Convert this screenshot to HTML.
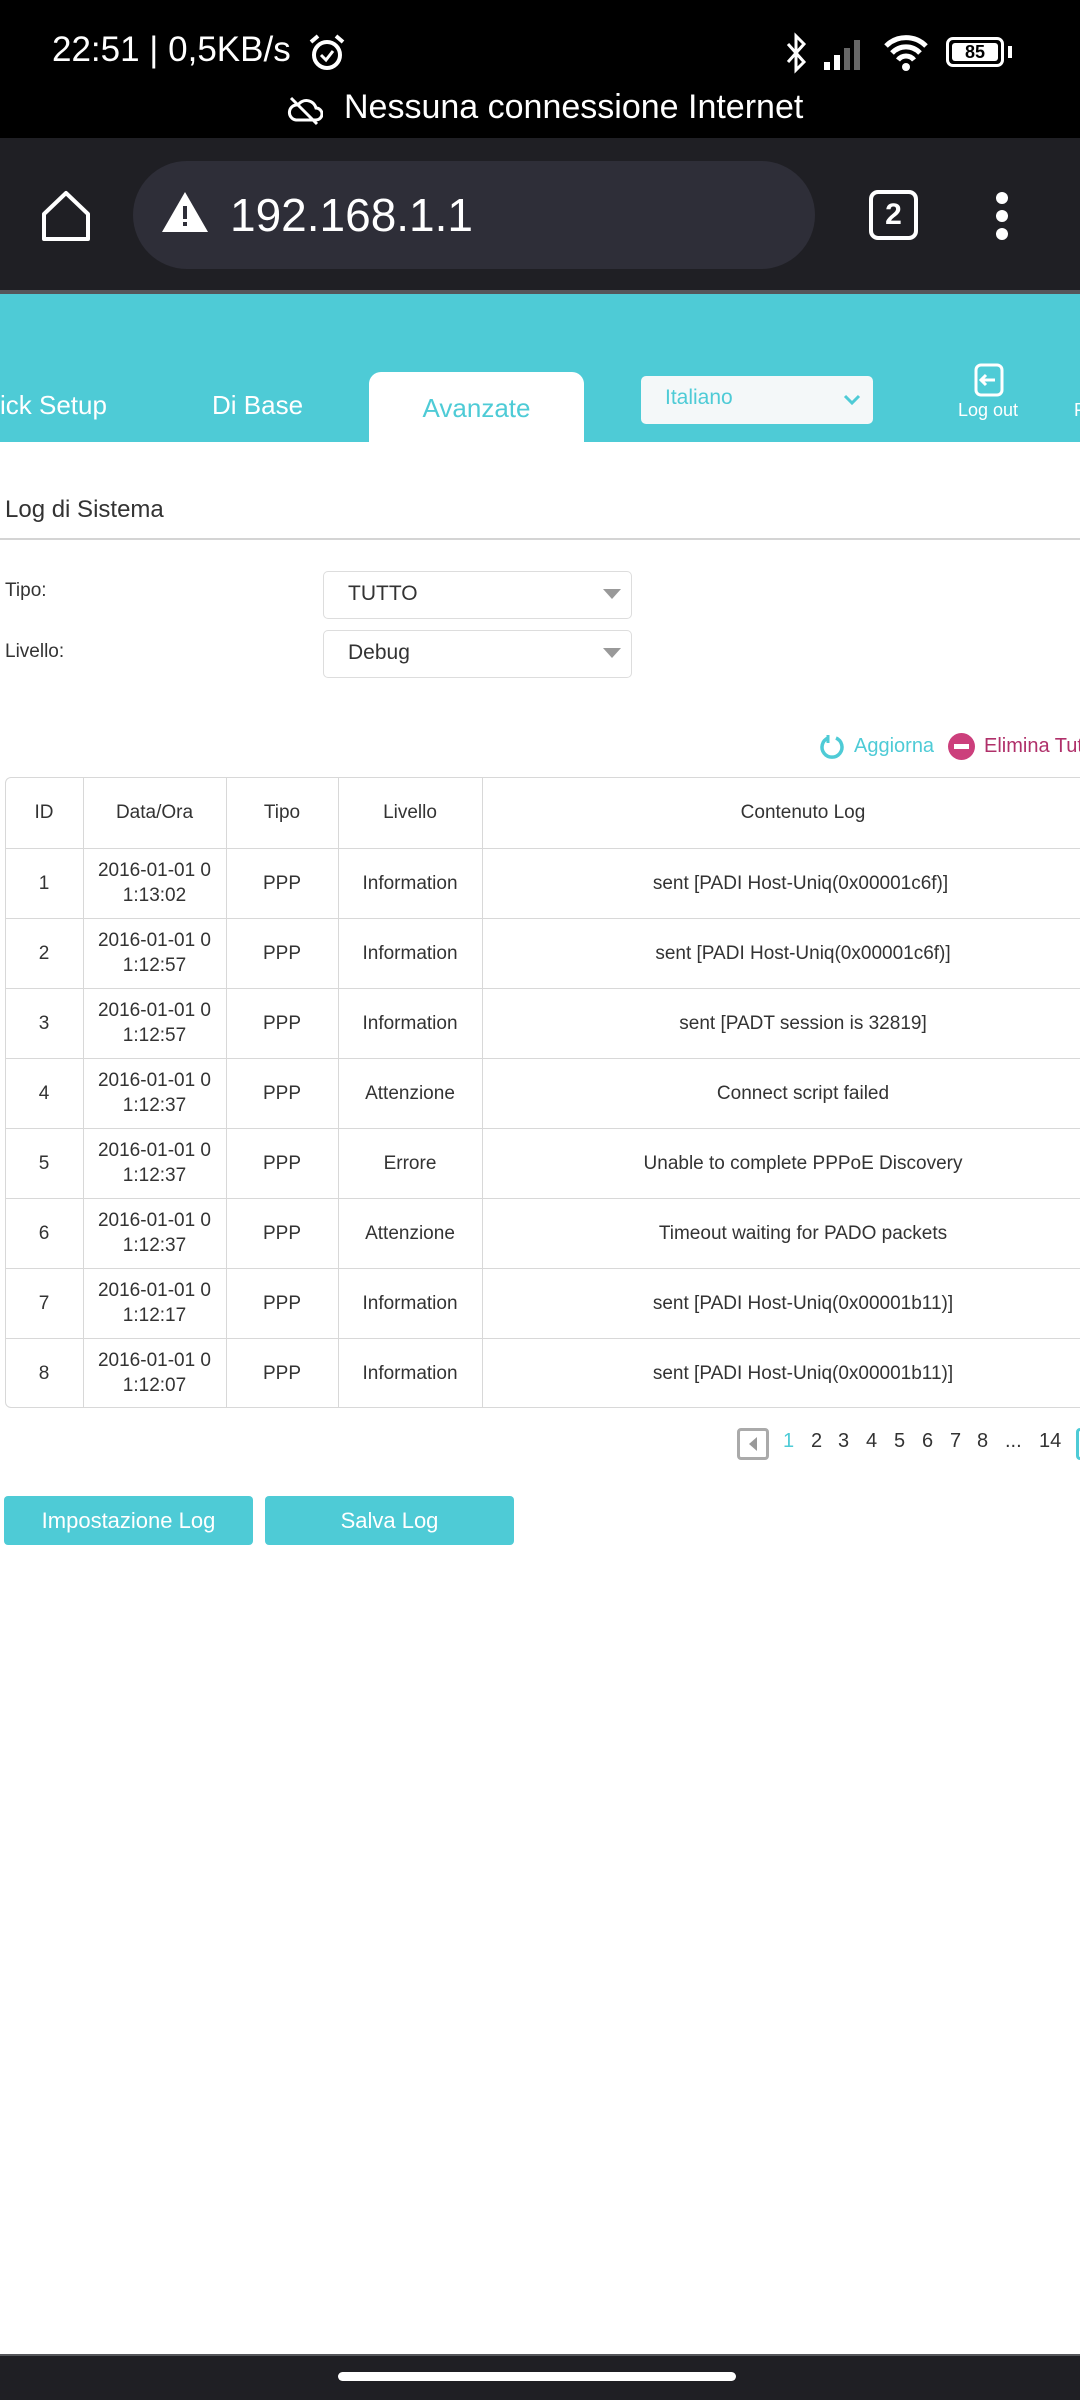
<!DOCTYPE html>
<html><head><meta charset="utf-8"><style>
*{margin:0;padding:0;box-sizing:border-box}
body{width:1080px;height:2400px;background:#fff;font-family:"Liberation Sans",sans-serif;position:relative;overflow:hidden;color:#333}
.a{position:absolute}
.st{background:#000;left:0;top:0;width:1080px;height:138px;color:#fff}
.tb{background:#1f1f24;left:0;top:138px;width:1080px;height:154px}
.teal{background:#4ecbd6;left:0;top:294px;width:1080px;height:148px}
table{border-collapse:collapse;font-size:19px;color:#333}
td{border:1.5px solid #d8d8d8;text-align:center;height:70px;line-height:25px}
.sel{border:1.5px solid #ddd;border-radius:5px;background:#fff;font-size:21px;color:#333;padding-left:24px;line-height:44px}
.tri{position:absolute;right:10px;top:17px;width:0;height:0;border-left:9px solid transparent;border-right:9px solid transparent;border-top:10px solid #999}
.btn{background:#4ecbd6;color:#fff;font-size:22px;text-align:center;line-height:49px;border-radius:4px;top:1496px;height:49px;width:249px}
.pg{top:1430px;font-size:20px;color:#333}
</style></head><body>
<div class="a st">
 <div class="a" style="left:52px;top:30px;font-size:35px;">22:51 | 0,5KB/s</div>
 <svg class="a" style="left:306px;top:32px" width="42" height="42" viewBox="0 0 42 42"><circle cx="21" cy="23" r="13" stroke="#fff" stroke-width="4" fill="none"/><path d="M15 23l5 5 7-9" stroke="#fff" stroke-width="3" fill="none"/><path d="M5 10l7-6M37 10l-7-6" stroke="#fff" stroke-width="4"/></svg>
 <svg class="a" style="left:782px;top:32px" width="30" height="42" viewBox="0 0 30 42"><path d="M6 12l16 18-8 8V4l8 8L6 30" stroke="#fff" stroke-width="3" fill="none"/></svg>
 <svg class="a" style="left:824px;top:36px" width="50" height="34"><rect x="0" y="26" width="6" height="8" fill="#fff"/><rect x="10" y="19" width="6" height="15" fill="#fff"/><rect x="20" y="12" width="6" height="22" fill="#666"/><rect x="30" y="4" width="6" height="30" fill="#666"/></svg>
 <svg class="a" style="left:882px;top:34px" width="48" height="38" viewBox="0 0 48 38"><path d="M4 12a28 28 0 0 1 40 0M10 19a19 19 0 0 1 28 0M16 26a10 10 0 0 1 16 0" stroke="#fff" stroke-width="5" fill="none"/><circle cx="24" cy="33" r="4" fill="#fff"/></svg>
 <div class="a" style="left:946px;top:37px;width:58px;height:30px;border:3px solid #fff;border-radius:7px"><div style="margin:3px;height:18px;background:#fff;border-radius:3px;color:#000;font-size:18px;font-weight:bold;text-align:center;line-height:18px">85</div></div>
 <div class="a" style="left:1008px;top:46px;width:4px;height:12px;background:#fff"></div>
 <svg class="a" style="left:287px;top:94px" width="36" height="32" viewBox="0 0 36 32"><path d="M9 26h20a6 6 0 0 0 0-12 10 10 0 0 0-18-3 7 7 0 0 0-2 15z" stroke="#fff" stroke-width="3" fill="none"/><path d="M4 4l26 26" stroke="#fff" stroke-width="3"/></svg>
 <div class="a" style="left:344px;top:88px;font-size:34px">Nessuna connessione Internet</div>
</div>
<div class="a tb">
 <svg class="a" style="left:40px;top:52px" width="52" height="52" viewBox="0 0 52 52"><path d="M4 24L26 3l22 21v25H4z" stroke="#fff" stroke-width="4" fill="none" stroke-linejoin="round"/></svg>
 <div class="a" style="left:133px;top:23px;width:682px;height:108px;background:#2e2e38;border-radius:54px"></div>
 <svg class="a" style="left:160px;top:52px" width="50" height="44" viewBox="0 0 50 44"><path d="M25 2L48 42H2z" fill="#fff"/><rect x="23" y="16" width="4" height="13" fill="#2e2e38"/><rect x="23" y="32" width="4" height="4" fill="#2e2e38"/></svg>
 <div class="a" style="left:230px;top:50px;font-size:46px;color:#fff">192.168.1.1</div>
 <div class="a" style="left:869px;top:52px;width:49px;height:50px;border:4px solid #fff;border-radius:9px;color:#fff;font-size:30px;font-weight:bold;text-align:center;line-height:42px">2</div>
 <div class="a" style="left:996px;top:54px;width:12px;height:12px;border-radius:6px;background:#fff"></div>
 <div class="a" style="left:996px;top:72px;width:12px;height:12px;border-radius:6px;background:#fff"></div>
 <div class="a" style="left:996px;top:90px;width:12px;height:12px;border-radius:6px;background:#fff"></div>
</div>
<div class="a" style="left:0;top:290px;width:1080px;height:4px;background:#55565a"></div>
<div class="a teal">
 <div class="a" style="left:0;top:96px;font-size:26px;color:#fff">ick Setup</div>
 <div class="a" style="left:212px;top:96px;font-size:26px;color:#fff">Di Base</div>
 <div class="a" style="left:369px;top:78px;width:215px;height:70px;background:#fff;border-radius:12px 12px 0 0;color:#4ecbd6;font-size:26px;text-align:center;line-height:72px">Avanzate</div>
 <div class="a" style="left:641px;top:82px;width:232px;height:48px;background:#f4f8f9;border-radius:5px;color:#4ecbd6;font-size:21px;padding:10px 0 0 24px">Italiano
  <svg class="a" style="right:12px;top:18px" width="18" height="12"><path d="M2 2l7 7 7-7" stroke="#4ecbd6" stroke-width="3" fill="none"/></svg></div>
 <svg class="a" style="left:973px;top:68px" width="32" height="36" viewBox="0 0 32 36"><rect x="3" y="3" width="26" height="30" rx="5" stroke="#fff" stroke-width="3" fill="none"/><path d="M8 18h14M13 13l-5 5 5 5" stroke="#fff" stroke-width="3" fill="none"/></svg>
 <div class="a" style="left:958px;top:106px;font-size:18px;color:#fff">Log out</div>
 <div class="a" style="left:1074px;top:106px;font-size:18px;color:#fff">F</div>
</div>
<div class="a" style="left:5px;top:496px;font-size:24px;color:#333">Log di Sistema</div>
<div class="a" style="left:0;top:538px;width:1080px;height:2px;background:#d4d4d4"></div>
<div class="a" style="left:5px;top:580px;font-size:19px">Tipo:</div>
<div class="a sel" style="left:323px;top:571px;width:309px;height:48px">TUTTO<div class="tri"></div></div>
<div class="a" style="left:5px;top:641px;font-size:19px">Livello:</div>
<div class="a sel" style="left:323px;top:630px;width:309px;height:48px">Debug<div class="tri"></div></div>
<svg class="a" style="left:818px;top:733px" width="28" height="28" viewBox="0 0 28 28"><path d="M10 5a10 10 0 1 0 8 0" stroke="#4ecbd6" stroke-width="3.5" fill="none"/><path d="M10 2v8" stroke="#4ecbd6" stroke-width="3"/></svg>
<div class="a" style="left:854px;top:735px;font-size:20px;color:#4ecbd6">Aggiorna</div>
<div class="a" style="left:948px;top:733px;width:27px;height:27px;border-radius:14px;background:#cc3f7c"><div style="margin:11px 6px;height:5px;background:#fff"></div></div>
<div class="a" style="left:984px;top:735px;font-size:20px;color:#b0306a;white-space:nowrap">Elimina Tutto</div>
<div class="a" style="left:5px;top:777px;width:1120px;height:631px;border:1.5px solid #d8d8d8;border-radius:6px;overflow:hidden">
<table style="width:1120px;margin:-1.5px">
<tr><td style="width:78px;height:71px">ID</td><td style="width:143px">Data/Ora</td><td style="width:112px">Tipo</td><td style="width:144px">Livello</td><td>Contenuto Log</td></tr>
<tr><td>1</td><td>2016-01-01 0<br>1:13:02</td><td>PPP</td><td>Information</td><td style="padding-right:5px">sent [PADI Host-Uniq(0x00001c6f)]</td></tr>
<tr><td>2</td><td>2016-01-01 0<br>1:12:57</td><td>PPP</td><td>Information</td><td>sent [PADI Host-Uniq(0x00001c6f)]</td></tr>
<tr><td>3</td><td>2016-01-01 0<br>1:12:57</td><td>PPP</td><td>Information</td><td>sent [PADT session is 32819]</td></tr>
<tr><td>4</td><td>2016-01-01 0<br>1:12:37</td><td>PPP</td><td>Attenzione</td><td>Connect script failed</td></tr>
<tr><td>5</td><td>2016-01-01 0<br>1:12:37</td><td>PPP</td><td>Errore</td><td>Unable to complete PPPoE Discovery</td></tr>
<tr><td>6</td><td>2016-01-01 0<br>1:12:37</td><td>PPP</td><td>Attenzione</td><td>Timeout waiting for PADO packets</td></tr>
<tr><td>7</td><td>2016-01-01 0<br>1:12:17</td><td>PPP</td><td>Information</td><td>sent [PADI Host-Uniq(0x00001b11)]</td></tr>
<tr><td>8</td><td>2016-01-01 0<br>1:12:07</td><td>PPP</td><td>Information</td><td>sent [PADI Host-Uniq(0x00001b11)]</td></tr>
</table></div>
<div class="a" style="left:737px;top:1428px;width:32px;height:32px;border:3px solid #aaa;border-radius:4px"><svg width="26" height="26"><path d="M17 6l-8 7 8 7z" fill="#999"/></svg></div>
<div class="a pg" style="left:783px;color:#4ecbd6">1</div>
<div class="a pg" style="left:811px">2</div>
<div class="a pg" style="left:838px">3</div>
<div class="a pg" style="left:866px">4</div>
<div class="a pg" style="left:894px">5</div>
<div class="a pg" style="left:922px">6</div>
<div class="a pg" style="left:950px">7</div>
<div class="a pg" style="left:977px">8</div>
<div class="a pg" style="left:1005px">...</div>
<div class="a pg" style="left:1039px">14</div>
<div class="a" style="left:1076px;top:1428px;width:32px;height:32px;border:3px solid #4ecbd6;border-radius:4px"></div>
<div class="a btn" style="left:4px">Impostazione Log</div>
<div class="a btn" style="left:265px">Salva Log</div>
<div class="a" style="left:0;top:2354px;width:1080px;height:46px;background:#1f1f24;border-top:2px solid #55565a"></div>
<div class="a" style="left:338px;top:2372px;width:398px;height:9px;border-radius:5px;background:#fff"></div>
</body></html>
